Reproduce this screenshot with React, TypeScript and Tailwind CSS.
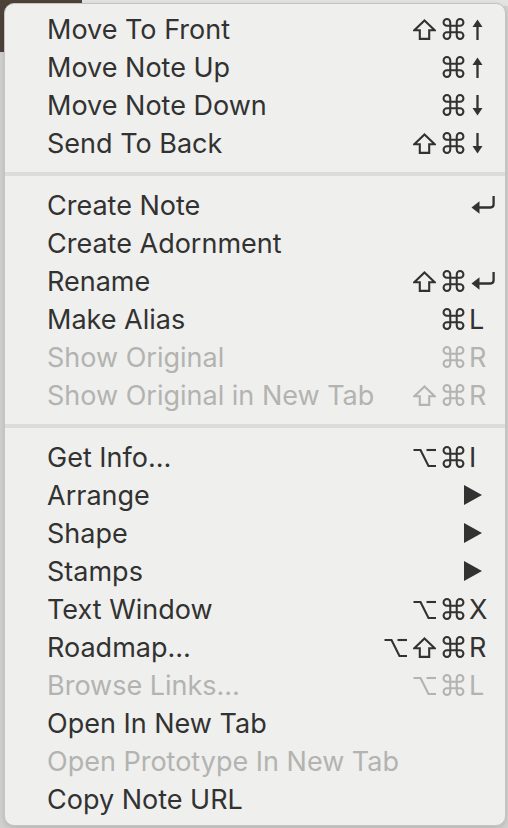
import React from "react";

type Item =
  | { sep: true }
  | { label: string; mods?: string[]; key?: string; disabled?: boolean; sub?: boolean; sep?: false };

const items: Item[] = [
  { label: "Move To Front", mods: ["shift", "cmd"], key: "up" },
  { label: "Move Note Up", mods: ["cmd"], key: "up" },
  { label: "Move Note Down", mods: ["cmd"], key: "down" },
  { label: "Send To Back", mods: ["shift", "cmd"], key: "down" },
  { sep: true },
  { label: "Create Note", mods: [], key: "ret" },
  { label: "Create Adornment" },
  { label: "Rename", mods: ["shift", "cmd"], key: "ret" },
  { label: "Make Alias", mods: ["cmd"], key: "L" },
  { label: "Show Original", mods: ["cmd"], key: "R", disabled: true },
  { label: "Show Original in New Tab", mods: ["shift", "cmd"], key: "R", disabled: true },
  { sep: true },
  { label: "Get Info…", mods: ["opt", "cmd"], key: "I" },
  { label: "Arrange", sub: true },
  { label: "Shape", sub: true },
  { label: "Stamps", sub: true },
  { label: "Text Window", mods: ["opt", "cmd"], key: "X" },
  { label: "Roadmap…", mods: ["opt", "shift", "cmd"], key: "R" },
  { label: "Browse Links…", mods: ["opt", "cmd"], key: "L", disabled: true },
  { label: "Open In New Tab" },
  { label: "Open Prototype In New Tab", disabled: true },
  { label: "Copy Note URL" },
];

function Mod({ name }: { name: string }) {
  const common = {
    fill: "none",
    stroke: "currentColor",
    strokeWidth: 2.1,
  };
  if (name === "shift")
    return (
      <svg width="23" height="21" viewBox="0 0 23 21" className="shrink-0">
        <path d="M11.5 1.5 L21.7 11.2 H16.2 V19.9 H6.8 V11.2 H1.3 Z" {...common} strokeLinejoin="miter" />
      </svg>
    );
  if (name === "cmd")
    return (
      <svg width="23" height="22" viewBox="0 0 22.4 22.4" className="shrink-0">
        <path
          d="M7.9 7.9 V4.5 A3.4 3.4 0 1 0 4.5 7.9 H7.9 M14.5 7.9 V4.5 A3.4 3.4 0 1 1 17.9 7.9 H14.5 M14.5 14.5 V17.9 A3.4 3.4 0 1 0 17.9 14.5 H14.5 M7.9 14.5 V17.9 A3.4 3.4 0 1 1 4.5 14.5 H7.9 M7.9 7.9 H14.5 V14.5 H7.9 Z"
          {...common}
        />
      </svg>
    );
  if (name === "opt")
    return (
      <svg width="23" height="21" viewBox="0 0 23 21" className="shrink-0">
        <path d="M0.5 3 H7.5 L15.5 19 H23" {...common} />
        <path d="M13.5 3 H23" {...common} />
      </svg>
    );
  return null;
}

function Key({ k }: { k: string }) {
  if (k === "up")
    return (
      <svg width="13" height="21" viewBox="0 0 13 21" className="ml-[2px] shrink-0">
        <path d="M6.5 5 V21" stroke="currentColor" strokeWidth="2.3" />
        <path d="M1.5 8 L6.5 0.5 L11.5 8 Z" fill="currentColor" />
      </svg>
    );
  if (k === "down")
    return (
      <svg width="13" height="21" viewBox="0 0 13 21" className="ml-[2px] shrink-0">
        <path d="M6.5 0 V16" stroke="currentColor" strokeWidth="2.3" />
        <path d="M1.5 13 L6.5 20.5 L11.5 13 Z" fill="currentColor" />
      </svg>
    );
  if (k === "ret")
    return (
      <svg width="25" height="21" viewBox="0 0 25 21" className="ml-[2px] shrink-0">
        <path
          d="M22.6 1 V9.3 Q22.6 12.5 19.4 12.5 H7"
          fill="none"
          stroke="currentColor"
          strokeWidth="2.3"
        />
        <path d="M0.5 12.5 L8.5 6.2 V18.8 Z" fill="currentColor" />
      </svg>
    );
  return <span className="text-[27px] leading-none">{k}</span>;
}

export default function App() {
  return (
    <div className="relative w-[508px] h-[828px] bg-[#d2d2d0] overflow-hidden">
      <div className="absolute left-0 top-0 w-[82px] h-[52px] bg-[#4d433b]" />
      <div className="absolute left-[82px] top-0 right-0 h-[6px] bg-[#e4e4e2]" />
      <div className="relative pt-[3px] pl-[4px] pr-[2px]">
        <div
          className="h-[823px] rounded-[10px] bg-[#efefed] border border-[#c4c4c2] shadow-[0_2px_6px_rgba(0,0,0,0.15)] pt-[6px] pb-[8px]"
          style={{ fontFamily: 'Inter, "Liberation Sans", sans-serif' }}
        >
          {items.map((it, i) =>
            it.sep ? (
              <div key={i} className="h-[24px] flex items-center">
                <div className="w-full h-[4px] bg-[#dcdcda]" />
              </div>
            ) : (
              <div
                key={i}
                className={`h-[38px] flex items-center pl-[42px] pr-[19px] ${
                  it.disabled ? "text-[#b3b3b1]" : "text-[#323232]"
                }`}
              >
                <span className="flex-1 text-[27px] leading-none">{it.label}</span>
                {it.sub ? (
                  <svg width="18" height="20" viewBox="0 0 18 20" className="mr-[4px] shrink-0">
                    <path d="M0 0 L18 10 L0 20 Z" fill="currentColor" />
                  </svg>
                ) : it.key ? (
                  <span className="flex items-center">
                    <span className="flex items-center gap-[6px]">
                      {it.mods!.map((m, j) => (
                        <Mod key={j} name={m} />
                      ))}
                    </span>
                    <span className="w-[17px] ml-[4px] flex items-center overflow-visible whitespace-nowrap">
                      <Key k={it.key} />
                    </span>
                  </span>
                ) : null}
              </div>
            )
          )}
        </div>
      </div>
    </div>
  );
}
